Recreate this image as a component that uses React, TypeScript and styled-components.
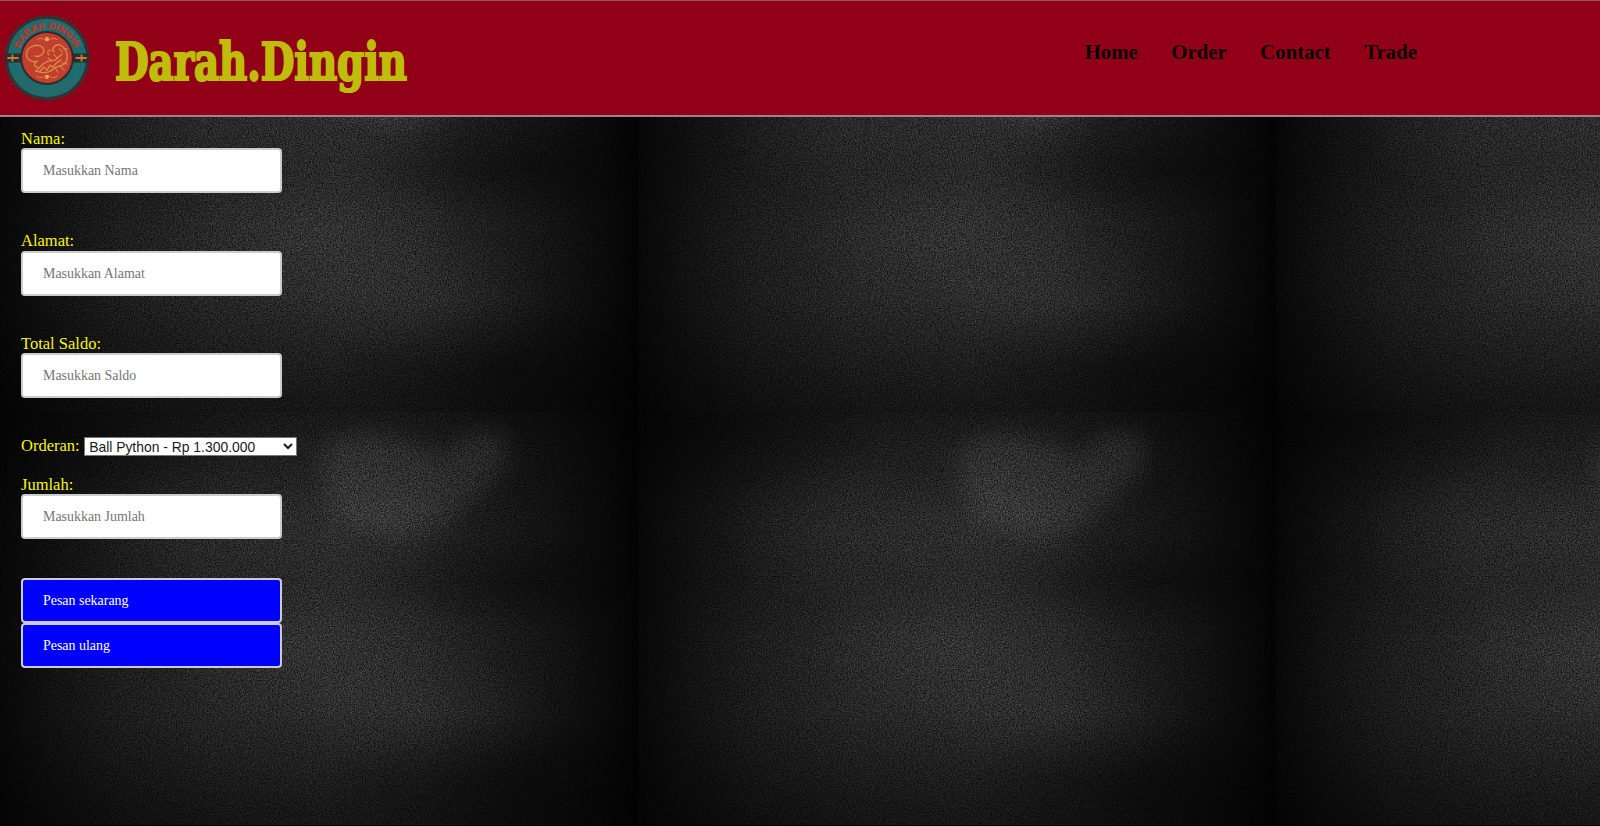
import React from "react";
import styled, { createGlobalStyle } from "styled-components";

const GlobalStyle = createGlobalStyle`
  * { box-sizing: border-box; }
  html, body { margin: 0; background: #060606; }
  body { font-family: "Liberation Serif", "Times New Roman", serif; font-size: 16.5px; }
`;

const TILE_W = 638;
const TILE_H = 412;

const Page = styled.div`
  position: relative;
  height: 826px;
  overflow: hidden;
  isolation: isolate;
`;

const Backdrop = styled.svg`
  position: absolute;
  inset: 0;
  width: 1600px;
  height: 826px;
  z-index: -1;
`;

const Grain = styled.rect`
  mix-blend-mode: overlay;
`;

const Header = styled.header`
  display: flex;
  justify-content: space-between;
  height: 117px;
  padding: 0 183px 0 4px;
  background: #920018;
  border-top: 1px solid #8c5762;
  border-bottom: 2px solid #a18087;
`;

const Brand = styled.div`
  display: flex;
  align-items: flex-start;
`;

const Emblem = styled.svg`
  width: 86px;
  height: 86px;
  margin-top: 14px;
`;

const Wordmark = styled.svg`
  width: 340px;
  height: 90px;
  margin: 24px 0 0 17px;
  overflow: visible;
`;

const Nav = styled.nav`
  display: flex;
  gap: 33.5px;
  padding-top: 39px;
`;

const NavLink = styled.a`
  color: #0b0002;
  font-size: 20.8px;
  line-height: 24px;
  font-weight: bold;
  text-decoration: none;
`;

const Form = styled.form`
  padding: 12.6px 21px;
`;

const Field = styled.div`
  display: flex;
  flex-direction: column;
  align-items: flex-start;
  margin-bottom: 39px;
`;

const Label = styled.label`
  color: #f6f614;
  line-height: 18.5px;
`;

const TextInput = styled.input`
  width: 261px;
  height: 45px;
  padding: 13px 20px 12px;
  border: 2px solid #ccc;
  border-radius: 4px;
  background: #fff;
  font-family: inherit;
  font-size: 13.95px;
  &::placeholder { color: #757575; }
`;

const OrderRow = styled.div`
  display: flex;
  align-items: center;
  gap: 4.5px;
  height: 18.8px;
  margin-bottom: 20px;
`;

const Select = styled.select`
  width: 213px;
  height: 19px;
  border: 1px solid #767676;
  border-radius: 0;
  background: #fff;
  color: #1a1a1a;
  padding: 0;
  font-family: "Liberation Sans", Arial, sans-serif;
  font-size: 13.9px;
`;

const Actions = styled.div`
  display: flex;
  flex-direction: column;
  align-items: flex-start;
`;

const ActionButton = styled.button`
  width: 261px;
  height: 45px;
  padding: 0 20px;
  border: 2px solid #ccccd8;
  border-radius: 4px;
  background: #00f;
  color: #fff;
  font-family: inherit;
  font-size: 13.95px;
  text-align: left;
`;

const horizontalTone: [number, string][] = [
  [0, "#070707"],
  [50, "#111111"],
  [120, "#1d1d1d"],
  [220, "#272727"],
  [330, "#2b2b2b"],
  [420, "#272727"],
  [490, "#1d1d1d"],
  [560, "#121212"],
  [615, "#080808"],
  [638, "#030303"],
];

const verticalShade: [number, number][] = [
  [0, 0.45],
  [40, 0.28],
  [110, 0.12],
  [170, 0.12],
  [230, 0],
  [300, 0.04],
  [350, 0.25],
  [390, 0.42],
  [412, 0.5],
];

function Texture() {
  const cells = [0, 1, 2].flatMap((c) => [0, 1, 2].map((r) => [c * TILE_W, r * TILE_H]));
  return (
    <Backdrop viewBox="0 0 1600 826" aria-hidden="true">
      <defs>
        <linearGradient id="across">
          {horizontalTone.map(([x, c]) => (
            <stop key={x} offset={x / TILE_W} stopColor={c} />
          ))}
        </linearGradient>
        <linearGradient id="down" x2="0" y2="1">
          {verticalShade.map(([y, o]) => (
            <stop key={y} offset={y / TILE_H} stopColor="#000" stopOpacity={o} />
          ))}
        </linearGradient>
        <radialGradient id="glow">
          <stop offset="0" stopColor="#fff" stopOpacity=".032" />
          <stop offset=".5" stopColor="#fff" stopOpacity=".018" />
          <stop offset="1" stopColor="#fff" stopOpacity="0" />
        </radialGradient>
        <radialGradient id="shadow">
          <stop offset="0" stopColor="#000" stopOpacity=".3" />
          <stop offset=".5" stopColor="#000" stopOpacity=".16" />
          <stop offset="1" stopColor="#000" stopOpacity="0" />
        </radialGradient>
        <filter id="edge" x="-50%" y="-50%" width="200%" height="200%" colorInterpolationFilters="sRGB">
          <feGaussianBlur stdDeviation="11" />
        </filter>
        <filter id="grain" x="0" y="0" width="100%" height="100%" colorInterpolationFilters="sRGB">
          <feTurbulence type="fractalNoise" baseFrequency="0.72" numOctaves="3" seed="4" />
          <feColorMatrix values="1.5 0 0 0 -0.25  1.5 0 0 0 -0.25  1.5 0 0 0 -0.25  0 0 0 0 1" />
        </filter>
        <clipPath id="cell">
          <rect width={TILE_W} height={TILE_H} />
        </clipPath>
        <g id="tile" clipPath="url(#cell)">
          <rect width={TILE_W} height={TILE_H} fill="url(#across)" />
          <rect width={TILE_W} height={TILE_H} fill="url(#down)" />
          <ellipse cx="310" cy="235" rx="150" ry="85" fill="url(#glow)" />
          <ellipse cx="430" cy="300" rx="130" ry="70" fill="url(#glow)" />
          <ellipse cx="200" cy="120" rx="120" ry="80" fill="url(#glow)" />
          <ellipse cx="340" cy="120" rx="120" ry="70" fill="url(#glow)" />
          <path
            d="M318 42 Q350 14 390 24 L435 42 L445 50 L455 28 Q480 14 505 22 L508 55 L475 85 L445 110 L395 128 L335 105 Z"
            fill="#fff"
            opacity=".07"
            filter="url(#edge)"
          />
          <ellipse cx="515" cy="170" rx="150" ry="50" fill="url(#shadow)" />
          <ellipse cx="500" cy="370" rx="180" ry="70" fill="url(#shadow)" />
          <ellipse cx="60" cy="20" rx="200" ry="80" fill="url(#shadow)" />
        </g>
      </defs>
      {cells.map(([x, y]) => (
        <use key={`${x}-${y}`} href="#tile" x={x} y={y} />
      ))}
      <Grain width="1600" height="826" filter="url(#grain)" opacity=".7" />
      <rect y="825" width="1600" height="1" fill="#000" />
    </Backdrop>
  );
}

function Logo() {
  return (
    <Emblem viewBox="-42.3 -42.3 84.6 84.6" role="img" aria-label="Darah Dingin">
      <defs>
        <path id="arcTop" d="M-28.8 0 A28.8 28.8 0 0 1 28.8 0" />
        <path id="arcBottom" d="M-34.5 0 A34.5 34.5 0 0 0 34.5 0" />
      </defs>
      <circle r="42" fill="#3a3034" />
      <circle r="38.6" fill="#1b6e70" />
      <path d="M-41 -4.5H41V4.5H-41Z" fill="#33292b" />
      <circle r="26.5" fill="#33292b" />
      <circle r="24.5" fill="#c03f2f" />
      <path d="M-39 0H-28M-34 -3.5V3.5M28 0H39M34 -3.5V3.5" fill="none" stroke="#b98048" strokeWidth="1.8" />
      <text
        fill="#b03c32"
        stroke="#b03c32"
        strokeWidth=".7"
        fontFamily="Liberation Sans, sans-serif"
        fontWeight="bold"
        fontSize="8.8"
        letterSpacing=".5"
        textAnchor="middle"
      >
        <textPath href="#arcTop" startOffset="50%">
          DARAH DINGIN
        </textPath>
      </text>
      <text
        fill="#456059"
        fontFamily="Liberation Sans, sans-serif"
        fontWeight="bold"
        fontSize="4.6"
        letterSpacing=".2"
        textAnchor="middle"
      >
        <textPath href="#arcBottom" startOffset="50%">
          REPTILES SHOP AND MORE
        </textPath>
      </text>
      <g fill="none" stroke="#d98d47" strokeLinecap="round" strokeWidth="1.3">
        <path d="M-9 9C-14 9 -13 4 -9 3C-16 5 -21 1 -20 -5C-19 -12 -8 -15 -4 -10C-1 -5 -7 0 -12 -2" />
        <path d="M-11 13C-5 15 2 15 7 10C11 7 17 9 19 3C22 -4 17 -12 12 -13C7 -13 4 -9 7 -6" />
        <path d="M-11 13L-4 6L1 3L8 2L15 -4M-7 13L-3 9L0 12L3 7L6 9L9 5L14 2" />
        <path d="M2 -3C-1 -6 2 -9 4 -7M5 3L1 0M10 0L7 -3M12 7L17 12M15 5L20 6M8 10L11 14M16 -9L20 -9M12 -9L15 -6" strokeWidth="1" />
        <path d="M-10 -18Q-5 -21 -3 -18M10 -18Q5 -21 3 -18M-10 18Q-5 21 -3 18M10 18Q5 21 3 18" strokeWidth=".9" />
      </g>
      <circle cy="-18.5" r="2.1" fill="#e6aa50" />
      <circle cy="18.5" r="2.1" fill="#e6aa50" />
    </Emblem>
  );
}

const links = ["Home", "Order", "Contact", "Trade"];

function TextField({ id, label, placeholder }: { id: string; label: string; placeholder: string }) {
  return (
    <Field>
      <Label htmlFor={id}>{label}</Label>
      <TextInput id={id} placeholder={placeholder} />
    </Field>
  );
}

export default function App() {
  return (
    <Page>
      <GlobalStyle />
      <Texture />
      <Header>
        <Brand>
          <Logo />
          <Wordmark viewBox="0 0 340 90">
            <text
              x="8"
              y="54.5"
              fill="#bfbc0c"
              stroke="#bfbc0c"
              strokeWidth="2.2"
              strokeLinejoin="miter"
              fontFamily="DejaVu Serif Condensed, DejaVu Serif, serif"
              fontWeight="bold"
              fontSize="53"
              textLength="292"
              lengthAdjust="spacingAndGlyphs"
            >
              Darah.Dingin
            </text>
          </Wordmark>
        </Brand>
        <Nav>
          {links.map((l) => (
            <NavLink key={l}>{l}</NavLink>
          ))}
        </Nav>
      </Header>
      <Form>
        <TextField id="nama" label="Nama:" placeholder="Masukkan Nama" />
        <TextField id="alamat" label="Alamat:" placeholder="Masukkan Alamat" />
        <TextField id="saldo" label="Total Saldo:" placeholder="Masukkan Saldo" />
        <OrderRow>
          <Label htmlFor="orderan">Orderan:</Label>
          <Select id="orderan">
            <option>Ball Python - Rp 1.300.000</option>
          </Select>
        </OrderRow>
        <TextField id="jumlah" label="Jumlah:" placeholder="Masukkan Jumlah" />
        <Actions>
          <ActionButton type="button">Pesan sekarang</ActionButton>
          <ActionButton type="button">Pesan ulang</ActionButton>
        </Actions>
      </Form>
    </Page>
  );
}
